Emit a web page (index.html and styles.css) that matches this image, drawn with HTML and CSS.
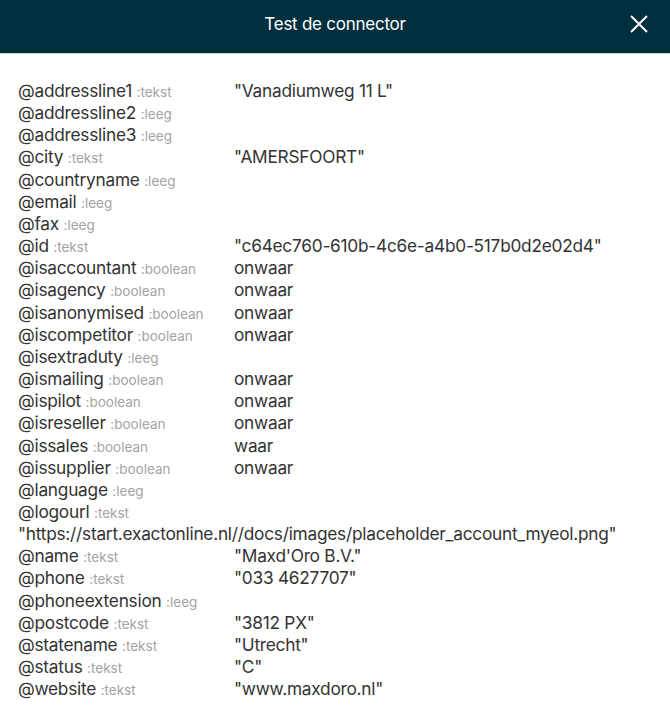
FILE: index.html
```html
<!DOCTYPE html>
<html lang="nl">
<head>
<meta charset="utf-8">
<title>Test de connector</title>
<link rel="stylesheet" href="styles.css">
</head>
<body>
<div class="header">
  <div class="title">Test de connector</div>
  <button class="close" aria-label="Sluiten">
    <svg width="18" height="18" viewBox="0 0 18 18"><path d="M1 1 L17 17 M17 1 L1 17" stroke="#fff" stroke-width="2" fill="none"/></svg>
  </button>
</div>
<div class="list">
  <div class="row"><span class="name">@addressline1 <span class="type">:tekst</span></span><span class="val">"Vanadiumweg 11 L"</span></div>
  <div class="row"><span class="name">@addressline2 <span class="type">:leeg</span></span><span class="val"></span></div>
  <div class="row"><span class="name">@addressline3 <span class="type">:leeg</span></span><span class="val"></span></div>
  <div class="row"><span class="name">@city <span class="type">:tekst</span></span><span class="val">"AMERSFOORT"</span></div>
  <div class="row"><span class="name">@countryname <span class="type">:leeg</span></span><span class="val"></span></div>
  <div class="row"><span class="name">@email <span class="type">:leeg</span></span><span class="val"></span></div>
  <div class="row"><span class="name">@fax <span class="type">:leeg</span></span><span class="val"></span></div>
  <div class="row"><span class="name">@id <span class="type">:tekst</span></span><span class="val">"c64ec760-610b-4c6e-a4b0-517b0d2e02d4"</span></div>
  <div class="row"><span class="name">@isaccountant <span class="type">:boolean</span></span><span class="val">onwaar</span></div>
  <div class="row"><span class="name">@isagency <span class="type">:boolean</span></span><span class="val">onwaar</span></div>
  <div class="row"><span class="name">@isanonymised <span class="type">:boolean</span></span><span class="val">onwaar</span></div>
  <div class="row"><span class="name">@iscompetitor <span class="type">:boolean</span></span><span class="val">onwaar</span></div>
  <div class="row"><span class="name">@isextraduty <span class="type">:leeg</span></span><span class="val"></span></div>
  <div class="row"><span class="name">@ismailing <span class="type">:boolean</span></span><span class="val">onwaar</span></div>
  <div class="row"><span class="name">@ispilot <span class="type">:boolean</span></span><span class="val">onwaar</span></div>
  <div class="row"><span class="name">@isreseller <span class="type">:boolean</span></span><span class="val">onwaar</span></div>
  <div class="row"><span class="name">@issales <span class="type">:boolean</span></span><span class="val">waar</span></div>
  <div class="row"><span class="name">@issupplier <span class="type">:boolean</span></span><span class="val">onwaar</span></div>
  <div class="row"><span class="name">@language <span class="type">:leeg</span></span><span class="val"></span></div>
  <div class="row wrap"><span class="name">@logourl <span class="type">:tekst</span></span><span class="val">"https://start.exactonline.nl//docs/images/placeholder_account_myeol.png"</span></div>
  <div class="row"><span class="name">@name <span class="type">:tekst</span></span><span class="val">"Maxd'Oro B.V."</span></div>
  <div class="row"><span class="name">@phone <span class="type">:tekst</span></span><span class="val">"033 4627707"</span></div>
  <div class="row"><span class="name">@phoneextension <span class="type">:leeg</span></span><span class="val"></span></div>
  <div class="row"><span class="name">@postcode <span class="type">:tekst</span></span><span class="val">"3812 PX"</span></div>
  <div class="row"><span class="name">@statename <span class="type">:tekst</span></span><span class="val">"Utrecht"</span></div>
  <div class="row"><span class="name">@status <span class="type">:tekst</span></span><span class="val">"C"</span></div>
  <div class="row"><span class="name">@website <span class="type">:tekst</span></span><span class="val">"www.maxdoro.nl"</span></div>
</div>
</body>
</html>
```
FILE: styles.css
```css
* { box-sizing: border-box; }
html, body { margin: 0; padding: 0; background: #fff; }
body { font-family: Inter, "Noto Sans", sans-serif; color: #333; width: 670px; height: 716px; overflow: hidden; }
.header {
  height: 54px;
  padding-bottom: 5px;
  background: #022f3d;
  border-bottom: 1px solid #c9d6d9;
  display: flex;
  align-items: center;
  justify-content: center;
  position: relative;
}
.title { color: #fff; font-size: 17px; font-weight: 400; letter-spacing: -0.25px; }
.close {
  position: absolute;
  right: 22px;
  top: 15px;
  width: 18px;
  height: 18px;
  padding: 0;
  border: 0;
  background: none;
  display: flex;
}
.list { padding: 26px 18px 0 18px; }
.row {
  display: flex;
  font-size: 17.3px;
  line-height: 22.15px;
  letter-spacing: -0.25px;
}
.name { width: 216px; flex: none; white-space: nowrap; }
.type { font-size: 13.5px; line-height: 1; color: #a3a3a3; letter-spacing: 0; }
.row.wrap { flex-direction: column; }
.row.wrap .val { white-space: nowrap; }
```
